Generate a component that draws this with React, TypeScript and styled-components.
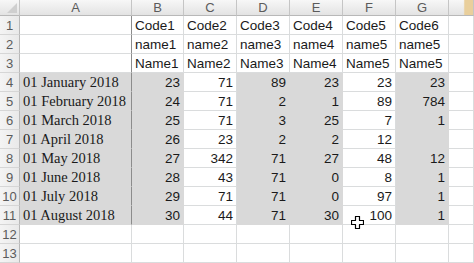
import React from "react";
import styled, { createGlobalStyle, css } from "styled-components";

const Global = createGlobalStyle`
  html, body { margin: 0; padding: 0; background: #ffffff; overflow: hidden; }
  #root { width: 474px; height: 263px; }
`;

const Sheet = styled.div`
  position: relative;
  width: 474px;
  height: 263px;
  display: grid;
  grid-template-columns: 20px 112px 52px 53px 53px 53px 53px 53px 25px;
  grid-template-rows: 16px repeat(13, 19px);
  background: #ffffff;
  overflow: hidden;
`;

const HeadCell = styled.div<{ $tan?: boolean }>`
  box-sizing: border-box;
  border-right: 1px solid #c5c5c5;
  border-bottom: 1px solid #b8b8b8;
  background: ${(p) =>
    p.$tan
      ? "linear-gradient(to right, rgba(0,0,0,0) 60%, #e9cf9c 66%), linear-gradient(#f7f7f7, #e3e3e3)"
      : "linear-gradient(#f7f7f7, #e3e3e3)"};
  color: #5b5b5b;
  font-family: "Liberation Sans", Arial, sans-serif;
  font-size: 13px;
  display: flex;
  align-items: center;
  justify-content: center;
  line-height: 1;
`;

const Corner = styled(HeadCell)`
  position: relative;
  &::after {
    content: "";
    position: absolute;
    right: 2px;
    bottom: 2px;
    width: 0;
    height: 0;
    border-left: 10px solid transparent;
    border-bottom: 10px solid #cfcfcf;
  }
`;

const RowNum = styled.div`
  box-sizing: border-box;
  border-right: 1px solid #b8b8b8;
  border-bottom: 1px solid #d6d6d6;
  background: linear-gradient(to right, #f4f4f4, #e9e9e9);
  color: #5b5b5b;
  font-family: "Liberation Sans", Arial, sans-serif;
  font-size: 13px;
  display: flex;
  align-items: center;
  justify-content: center;
  line-height: 1;
`;

const Cell = styled.div<{ $fill?: boolean; $right?: boolean; $serif?: boolean; $dark?: boolean }>`
  box-sizing: border-box;
  display: flex;
  align-items: flex-end;
  justify-content: ${(p) => (p.$right ? "flex-end" : "flex-start")};
  padding: 0 3px 2px 3px;
  white-space: nowrap;
  color: #1a1a1a;
  line-height: 1;
  font-family: ${(p) =>
    p.$serif ? '"Liberation Serif", "Times New Roman", serif' : '"Liberation Sans", Arial, sans-serif'};
  font-size: ${(p) => (p.$serif ? "14.5px" : "13.5px")};
  ${(p) =>
    p.$fill
      ? css`
          background: #d9d9d9;
          border-right: 1px solid #d9d9d9;
          border-bottom: 1px solid #d9d9d9;
        `
      : css`
          background: #ffffff;
          border-right: 1px solid #dadcdd;
          border-bottom: 1px solid #dadcdd;
        `}
  ${(p) =>
    p.$dark &&
    css`
      border-right: 1px solid #8c8c8c;
    `}
`;

const Cursor = styled.svg`
  position: absolute;
  left: 351px;
  top: 216px;
`;

const letters = ["A", "B", "C", "D", "E", "F", "G"];

const dates = [
  "01 January 2018",
  "01 February 2018",
  "01 March 2018",
  "01 April 2018",
  "01 May 2018",
  "01 June 2018",
  "01 July 2018",
  "01 August 2018",
];

const head: string[][] = [
  ["Code1", "Code2", "Code3", "Code4", "Code5", "Code6"],
  ["name1", "name2", "name3", "name4", "name5", "name5"],
  ["Name1", "Name2", "Name3", "Name4", "Name5", "Name5"],
];

const data: string[][] = [
  ["23", "71", "89", "23", "23", "23"],
  ["24", "71", "2", "1", "89", "784"],
  ["25", "71", "3", "25", "7", "1"],
  ["26", "23", "2", "2", "12", ""],
  ["27", "342", "71", "27", "48", "12"],
  ["28", "43", "71", "0", "8", "1"],
  ["29", "71", "71", "0", "97", "1"],
  ["30", "44", "71", "30", "100", "1"],
];

const filledCols = [true, false, true, true, false, true];

export default function App() {
  const rows: React.ReactNode[] = [];
  for (let r = 1; r <= 13; r++) {
    rows.push(<RowNum key={`n${r}`}>{r}</RowNum>);
    if (r <= 3) {
      rows.push(<Cell key={`a${r}`} $dark />);
      head[r - 1].forEach((t, i) => rows.push(<Cell key={`h${r}-${i}`}>{t}</Cell>));
    } else if (r <= 11) {
      rows.push(
        <Cell key={`a${r}`} $fill $serif $dark>
          {dates[r - 4]}
        </Cell>
      );
      data[r - 4].forEach((t, i) =>
        rows.push(
          <Cell key={`d${r}-${i}`} $fill={filledCols[i]} $right>
            {t}
          </Cell>
        )
      );
    } else {
      rows.push(<Cell key={`a${r}`} />);
      for (let i = 0; i < 6; i++) rows.push(<Cell key={`e${r}-${i}`} />);
    }
    rows.push(<Cell key={`x${r}`} />);
  }

  return (
    <>
      <Global />
      <Sheet>
        <Corner />
        {letters.map((l) => (
          <HeadCell key={l}>{l}</HeadCell>
        ))}
        <HeadCell $tan />
        {rows}
        <Cursor width="13" height="13" viewBox="0 0 13 13">
          <path
            d="M4.5 0.5 H8.5 V4.5 H12.5 V8.5 H8.5 V12.5 H4.5 V8.5 H0.5 V4.5 H4.5 Z"
            fill="#ffffff"
            stroke="#000000"
            strokeWidth="1.2"
            strokeLinejoin="round"
          />
        </Cursor>
      </Sheet>
    </>
  );
}
